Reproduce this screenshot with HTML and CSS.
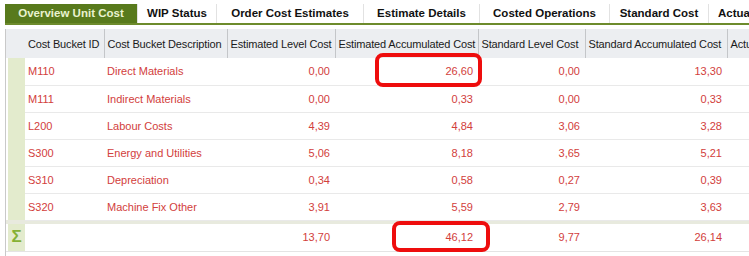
FILE: index.html
```html
<!DOCTYPE html>
<html lang="en">
<head>
    <meta charset="UTF-8">
    <title>Overview Unit Cost</title>
    <link rel="stylesheet" href="styles.css">
</head>
<body>
    <div class="tabs">
        <div class="tab active t1">Overview Unit Cost</div>
        <div class="tab t2">WIP Status</div>
        <div class="tab t3">Order Cost Estimates</div>
        <div class="tab t4">Estimate Details</div>
        <div class="tab t5">Costed Operations</div>
        <div class="tab t6">Standard Cost</div>
        <div class="tab t7">Actual Cost</div>
    </div>

    <div class="grid">
        <table>
            <colgroup>
                <col class="c-sel">
                <col class="c-id">
                <col class="c-desc">
                <col class="c-elc">
                <col class="c-eac">
                <col class="c-slc">
                <col class="c-sac">
                <col class="c-act">
            </colgroup>
            <thead>
                <tr>
                    <th></th>
                    <th>Cost Bucket ID</th>
                    <th>Cost Bucket Description</th>
                    <th>Estimated Level Cost</th>
                    <th>Estimated Accumulated Cost</th>
                    <th>Standard Level Cost</th>
                    <th>Standard Accumulated Cost</th>
                    <th>Actual Level Cost</th>
                </tr>
            </thead>
            <tbody>
                <tr><td class="sel"></td><td>M110</td><td>Direct Materials</td><td class="num">0,00</td><td class="num">26,60</td><td class="num">0,00</td><td class="num">13,30</td><td></td></tr>
                <tr><td class="sel"></td><td>M111</td><td>Indirect Materials</td><td class="num">0,00</td><td class="num">0,33</td><td class="num">0,00</td><td class="num">0,33</td><td></td></tr>
                <tr><td class="sel"></td><td>L200</td><td>Labour Costs</td><td class="num">4,39</td><td class="num">4,84</td><td class="num">3,06</td><td class="num">3,28</td><td></td></tr>
                <tr><td class="sel"></td><td>S300</td><td>Energy and Utilities</td><td class="num">5,06</td><td class="num">8,18</td><td class="num">3,65</td><td class="num">5,21</td><td></td></tr>
                <tr><td class="sel"></td><td>S310</td><td>Depreciation</td><td class="num">0,34</td><td class="num">0,58</td><td class="num">0,27</td><td class="num">0,39</td><td></td></tr>
                <tr><td class="sel"></td><td>S320</td><td>Machine Fix Other</td><td class="num">3,91</td><td class="num">5,59</td><td class="num">2,79</td><td class="num">3,63</td><td></td></tr>
                <tr class="band"><td colspan="8"></td></tr>
                <tr class="sum"><td class="sel sigma">Σ</td><td></td><td></td><td class="num">13,70</td><td class="num">46,12</td><td class="num">9,77</td><td class="num">26,14</td><td></td></tr>
            </tbody>
        </table>

        <!-- highlight marks drawn over the grid -->
        <div class="mark mark-top"></div>
        <div class="mark mark-sum"></div>
    </div>
</body>
</html>
```

FILE: styles.css
```css
body {
    margin: 0;
    font-family: 'Liberation Sans', Arial, sans-serif;
    background: #ffffff;
    width: 749px;
    height: 256px;
    overflow: hidden;
}

/* Tab strip */
.tabs {
    display: flex;
    margin: 4px 0 0 5px;
    border-bottom: 2px solid #6d8b2c;
    white-space: nowrap;
    overflow: hidden;
}

.tab {
    height: 19px;
    line-height: 19px;
    font-size: 11.5px;
    font-weight: bold;
    color: #111;
    text-align: center;
    border-right: 1px solid #e2e2e2;
    box-sizing: border-box;
    flex: none;
}

.tab.active {
    background: #587a1c;
    color: #e9f2cf;
}

.t1 { width: 133px; }
.t2 { width: 79px; }
.t3 { width: 147px; }
.t4 { width: 116px; }
.t5 { width: 130px; }
.t6 { width: 99px; }
.t7 { width: 100px; border-right: none; text-align: left; padding-left: 9px; }

/* Grid */
.grid {
    position: relative;
    margin: 4px 0 0 5px;
    border-left: 1px solid #c9c9c9;
    height: 227px;
    overflow: hidden;
}

table {
    border-collapse: collapse;
    table-layout: fixed;
    width: 843px;
    font-size: 11px;
}

.c-sel { width: 19px; }
.c-id { width: 79px; }
.c-desc { width: 123px; }
.c-elc { width: 108px; }
.c-eac { width: 143px; }
.c-slc { width: 107px; }
.c-sac { width: 142px; }
.c-act { width: 122px; }

th {
    height: 29px;
    padding: 1px 2px 0 3px;
    background: #eceef1;
    color: #1a1a1a;
    font-weight: normal;
    text-align: left;
    white-space: nowrap;
    letter-spacing: -0.15px;
    border-right: 1px solid #c4c6c9;
    box-sizing: border-box;
}

th:first-child {
    border-right: none;
}

td {
    height: 27px;
    padding: 0 4px 0 3px;
    color: #d2403c;
    white-space: nowrap;
    border-bottom: 1px solid #e9e9e9;
    box-sizing: border-box;
}

td.num {
    text-align: right;
    padding-right: 5px;
}

td.sel {
    padding: 0;
    background: linear-gradient(to right, #ffffff 2px, #e3ebcd 2px);
    border-bottom: none;
}

.band td {
    height: 4px;
    padding: 0;
    background: #e8eade;
    border-bottom: none;
}

.sum td {
    height: 27px;
    border-bottom: 1px solid #e4e4e4;
}

td.sigma {
    color: #86b135;
    font-weight: bold;
    font-size: 17px;
    text-align: center;
    padding-left: 2px;
}

/* Red callout boxes */
.mark {
    position: absolute;
    border: 4px solid #ee0d0d;
    border-radius: 8px;
    box-sizing: border-box;
}

.mark-top {
    left: 369px;
    top: 24px;
    width: 107px;
    height: 34px;
}

.mark-sum {
    left: 386px;
    top: 192px;
    width: 98px;
    height: 31px;
}
```
